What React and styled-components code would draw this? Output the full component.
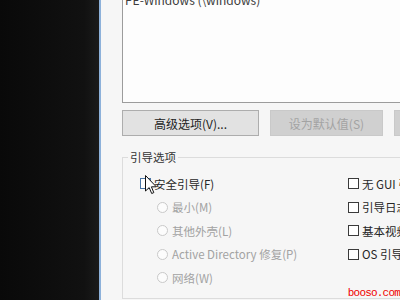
import styled, { createGlobalStyle, css } from "styled-components";

const GlobalStyle = createGlobalStyle`
  html, body { margin: 0; padding: 0; }
  body {
    width: 400px;
    height: 300px;
    overflow: hidden;
    background: #0b0b0b;
    font-family: "Noto Sans CJK SC", "Noto Sans", sans-serif;
  }
`;

const Screen = styled.div`
  position: relative;
  display: flex;
  width: 400px;
  height: 300px;
  overflow: hidden;
`;

const Desktop = styled.div`
  width: 99px;
  flex-shrink: 0;
  background: linear-gradient(90deg, #090909 0%, #111 85%, #1a1a1a 100%);
`;

const Dialog = styled.div`
  flex-shrink: 0;
  width: 340px;
  border-left: 2px solid #8db1da;
  background: #f6f6f6;
  padding-left: 21px;
`;

const ListBox = styled.div`
  box-sizing: border-box;
  height: 115px;
  margin-top: -12px;
  padding: 3px 2px 0;
  border: 1px solid #9c9c9c;
  border-right: none;
  background: #fdfdfd;
  font-size: 12px;
  line-height: 16px;
  color: #3c3c3c;
`;

const ButtonRow = styled.div`
  display: flex;
  gap: 11px;
  margin-top: 7px;
`;

const Button = styled.div`
  box-sizing: border-box;
  flex-shrink: 0;
  width: ${(p) => p.w}px;
  height: 26px;
  display: flex;
  align-items: center;
  justify-content: center;
  font-size: 12px;
  border: 1px solid #adadad;
  background: #e2e2e2;
  color: #222;
  ${(p) => p.disabled && css`
    border-color: #c9c9c9;
    background: #d0d0d0;
    color: #a3a3a3;
  `}
`;

const Group = styled.fieldset`
  box-sizing: border-box;
  height: 150px;
  margin: 13px 0 0;
  padding: 7px 0 0;
  min-width: 0;
  border: 1px solid #dcdcdc;
  border-right: none;
`;

const Legend = styled.legend`
  margin-left: 5px;
  padding: 0 2px;
  font-size: 11.5px;
  line-height: 16px;
  color: #333;
`;

const Options = styled.div`
  display: grid;
  grid-template-columns: 208px 1fr;
  padding-left: 17px;
`;

const Column = styled.div`
  display: flex;
  flex-direction: column;
`;

const Row = styled.div`
  height: 23.5px;
  display: flex;
  align-items: center;
  gap: 3px;
  padding-left: ${(p) => (p.indent ? 17 : 0)}px;
  font-size: 11.5px;
  white-space: nowrap;
  color: ${(p) => (p.disabled ? "#a2a2a2" : "#262626")};
`;

const CheckBox = styled.span`
  box-sizing: border-box;
  flex-shrink: 0;
  width: 11px;
  height: 11px;
  border: 1px solid ${(p) => (p.hover ? "#4a76a6" : "#3a3a3a")};
  background: #fff;
`;

const Radio = styled.span`
  box-sizing: border-box;
  flex-shrink: 0;
  width: 11px;
  height: 11px;
  border-radius: 50%;
  border: 1px solid #c9c9c9;
  background: #fcfcfc;
  margin-right: 1px;
`;

const Cursor = styled.svg`
  position: absolute;
  left: 145px;
  top: 175px;
`;

const Watermark = styled.div`
  position: absolute;
  right: 0;
  bottom: 1px;
  font-family: "Liberation Mono", monospace;
  font-size: 11px;
  letter-spacing: -0.8px;
  line-height: 12px;
  color: #f00000;
`;

const radios = ["最小(M)", "其他外壳(L)", "Active Directory 修复(P)", "网络(W)"];
const checks = ["无 GUI 引导", "引导日志", "基本视频", "OS 引导信息"];

export default function App() {
  return (
    <Screen>
      <GlobalStyle />
      <Desktop />
      <Dialog>
        <ListBox>PE-Windows (\windows)</ListBox>
        <ButtonRow>
          <Button w={137}>高级选项(V)...</Button>
          <Button w={113} disabled>设为默认值(S)</Button>
          <Button w={84} disabled>删除(D)</Button>
        </ButtonRow>
        <Group>
          <Legend>引导选项</Legend>
          <Options>
            <Column>
              <Row>
                <CheckBox hover />
                安全引导(F)
              </Row>
              {radios.map((r) => (
                <Row key={r} indent disabled>
                  <Radio />
                  {r}
                </Row>
              ))}
            </Column>
            <Column>
              {checks.map((c) => (
                <Row key={c}>
                  <CheckBox />
                  {c}
                </Row>
              ))}
            </Column>
          </Options>
        </Group>
      </Dialog>
      <Cursor width="13" height="20" viewBox="0 0 13 20">
        <path
          d="M0.5 0.5 L0.5 16 L4.2 12.6 L6.7 18.5 L8.8 17.6 L6.4 11.8 L11.3 11.8 Z"
          fill="#fff"
          stroke="#111"
          strokeWidth="1"
          strokeLinejoin="round"
        />
      </Cursor>
      <Watermark>booso.com</Watermark>
    </Screen>
  );
}
